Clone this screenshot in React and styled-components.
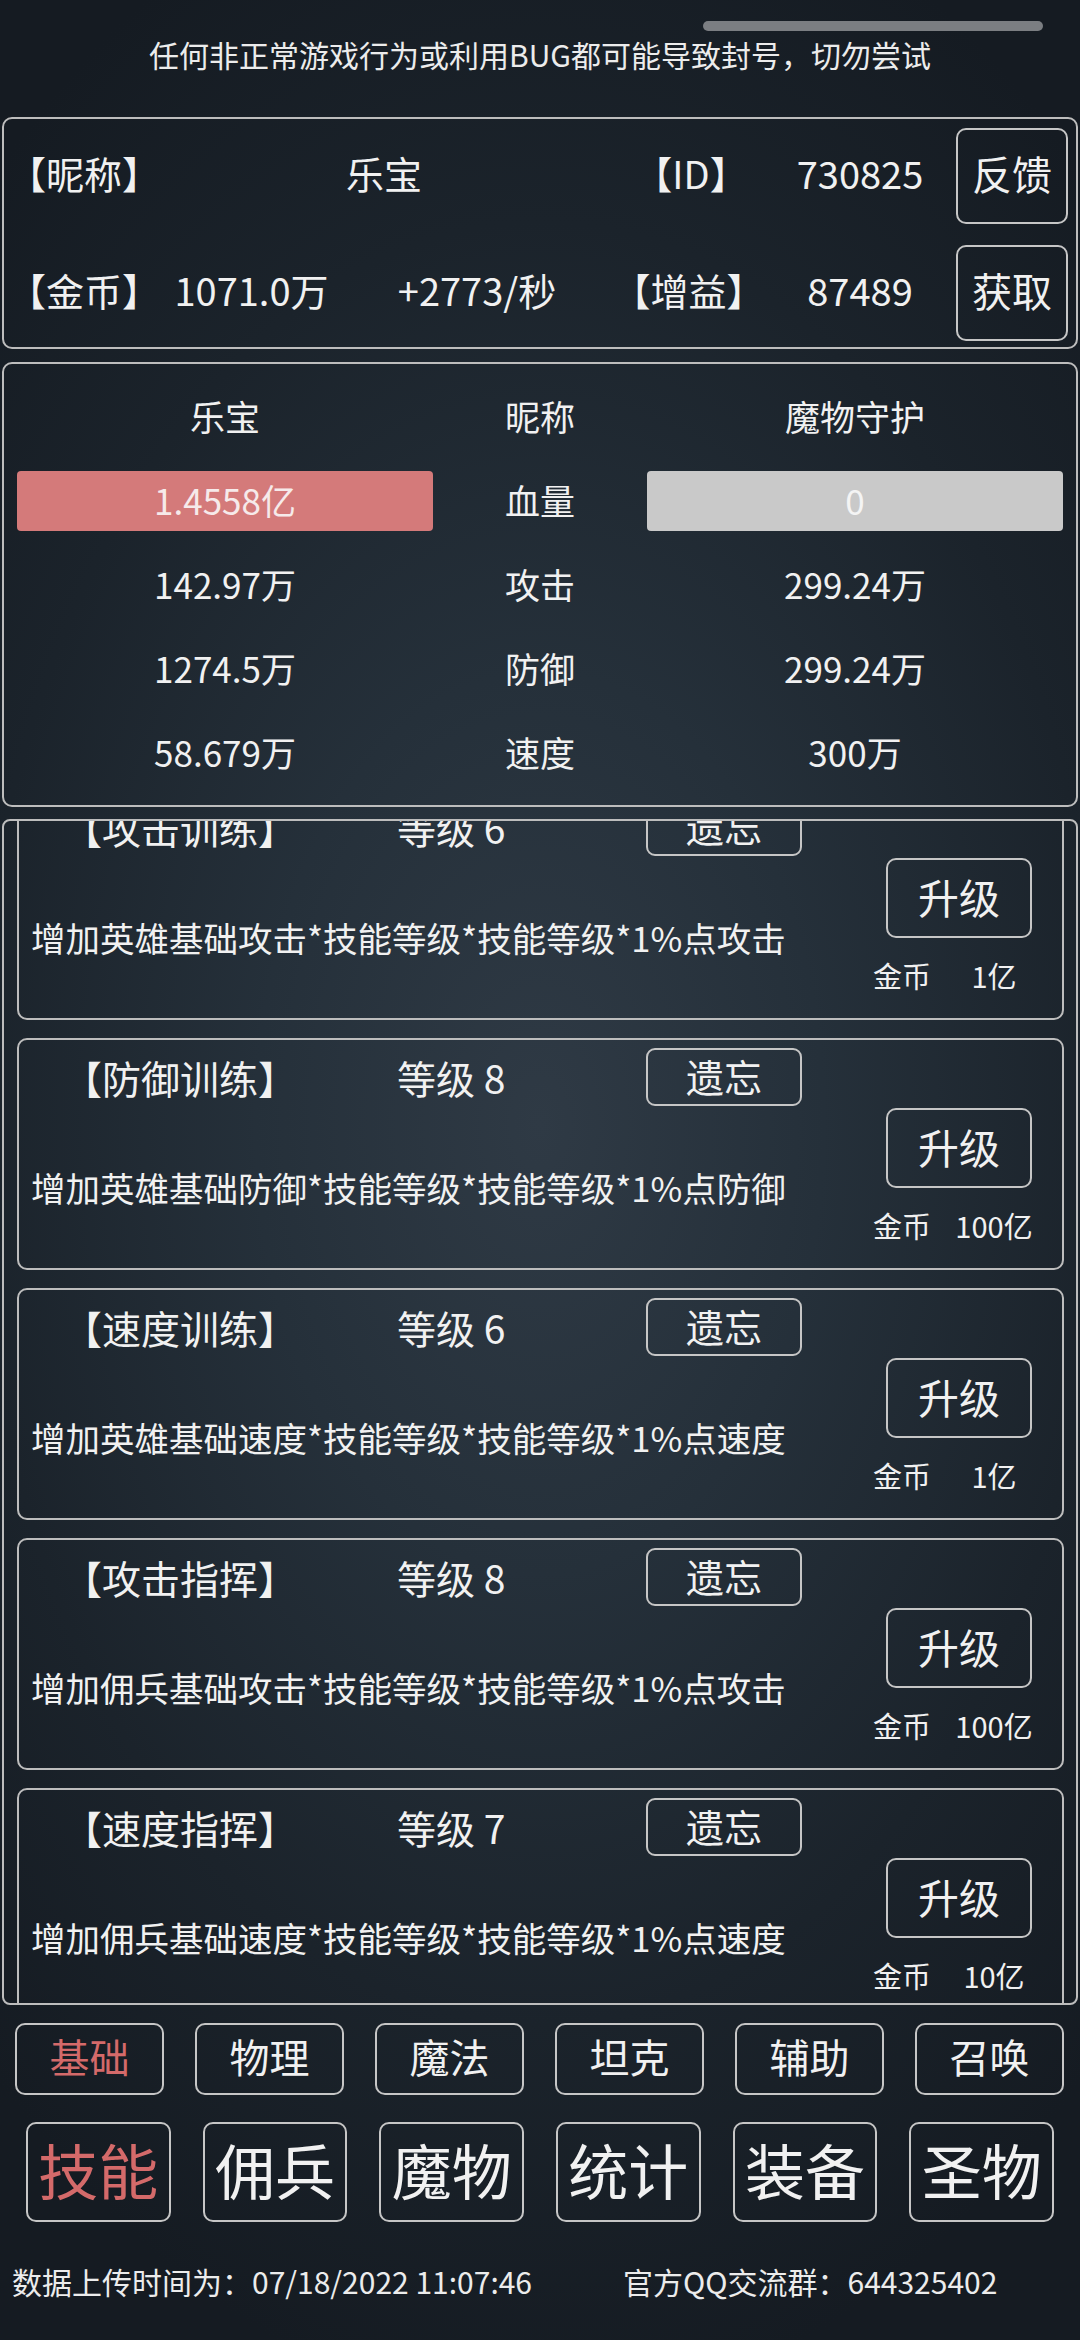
import React, { useLayoutEffect, useRef } from "react";
import styled, { createGlobalStyle } from "styled-components";

const SKILLS = [
  { id: 1, name: "【攻击训练】", level: 6, desc: "增加英雄基础攻击*技能等级*技能等级*1%点攻击", cost: "1亿" },
  { id: 2, name: "【防御训练】", level: 8, desc: "增加英雄基础防御*技能等级*技能等级*1%点防御", cost: "100亿" },
  { id: 3, name: "【速度训练】", level: 6, desc: "增加英雄基础速度*技能等级*技能等级*1%点速度", cost: "1亿" },
  { id: 4, name: "【攻击指挥】", level: 8, desc: "增加佣兵基础攻击*技能等级*技能等级*1%点攻击", cost: "100亿" },
  { id: 5, name: "【速度指挥】", level: 7, desc: "增加佣兵基础速度*技能等级*技能等级*1%点速度", cost: "10亿" },
];

const STATS = [
  { label: "攻击", mine: "142.97万", foe: "299.24万" },
  { label: "防御", mine: "1274.5万", foe: "299.24万" },
  { label: "速度", mine: "58.679万", foe: "300万" },
];

const SUB_TABS = ["基础", "物理", "魔法", "坦克", "辅助", "召唤"];
const MAIN_TABS = ["技能", "佣兵", "魔物", "统计", "装备", "圣物"];

export default function App() {
  const listRef = useRef(null);

  // the skill list is shown scrolled a little, first card partly hidden
  useLayoutEffect(() => {
    if (listRef.current) listRef.current.scrollTop = 45;
  }, []);

  return (
    <>
      <GlobalStyle />
      <Screen>
        <StatusRow>
          <Pill />
        </StatusRow>
        <Notice>任何非正常游戏行为或利用BUG都可能导致封号，切勿尝试</Notice>

        <Panel>
          <InfoRow $cols="148px 456px 158px 180px 118px">
            <Cell>【昵称】</Cell>
            <Cell>乐宝</Cell>
            <Cell>【ID】</Cell>
            <Cell>730825</Cell>
            <SideButton>反馈</SideButton>
          </InfoRow>
          <InfoRow $cols="148px 191px 260px 163px 180px 118px">
            <Cell>【金币】</Cell>
            <Cell>1071.0万</Cell>
            <Cell>+2773/秒</Cell>
            <Cell>【增益】</Cell>
            <Cell>87489</Cell>
            <SideButton>获取</SideButton>
          </InfoRow>
        </Panel>

        <StatsPanel>
          <StatCell>乐宝</StatCell>
          <StatCell>昵称</StatCell>
          <StatCell>魔物守护</StatCell>

          <StatCell>
            <HpBar $tone="red">1.4558亿</HpBar>
          </StatCell>
          <StatCell>血量</StatCell>
          <StatCell>
            <HpBar $tone="gray">0</HpBar>
          </StatCell>

          {STATS.map((s) => (
            <React.Fragment key={s.label}>
              <StatCell>{s.mine}</StatCell>
              <StatCell>{s.label}</StatCell>
              <StatCell>{s.foe}</StatCell>
            </React.Fragment>
          ))}
        </StatsPanel>

        <SkillList ref={listRef}>
          {SKILLS.map((skill) => (
            <SkillCard key={skill.id} skill={skill} />
          ))}
        </SkillList>

        <TabRow $pad="0 16px 0 15px" $gap="31px" $mt="18px">
          {SUB_TABS.map((t, i) => (
            <SubTab key={t} $active={i === 0}>
              {t}
            </SubTab>
          ))}
        </TabRow>

        <TabRow $pad="0 26px" $gap="32px" $mt="27px">
          {MAIN_TABS.map((t, i) => (
            <MainTab key={t} $active={i === 0}>
              {t}
            </MainTab>
          ))}
        </TabRow>

        <Footer>
          <span>数据上传时间为：07/18/2022 11:07:46</span>
          <span>官方QQ交流群：644325402</span>
        </Footer>
      </Screen>
    </>
  );
}

function SkillCard({ skill }) {
  return (
    <Card>
      <CardHead>
        <span>{skill.name}</span>
        <span>等级 {skill.level}</span>
        <ForgetButton>遗忘</ForgetButton>
      </CardHead>
      <CardBody>
        <Desc>{skill.desc}</Desc>
        <UpgradeCol>
          <UpgradeButton>升级</UpgradeButton>
          <CostRow>
            <span>金币</span>
            <CostValue>{skill.cost}</CostValue>
          </CostRow>
        </UpgradeCol>
      </CardBody>
    </Card>
  );
}

const GlobalStyle = createGlobalStyle`
  html, body {
    margin: 0;
    padding: 0;
  }
  body {
    background: #161c23;
    font-family: "Noto Sans CJK SC", "Noto Sans", sans-serif;
    color: #f1f1f1;
  }
  * {
    box-sizing: border-box;
  }
`;

const Screen = styled.div`
  width: 1080px;
  height: 2340px;
  overflow: hidden;
  display: flex;
  flex-direction: column;
  background: radial-gradient(
    ellipse 75% 55% at 50% 48%,
    #2f3a45 0%,
    #25303a 35%,
    #1b232b 70%,
    #151b22 100%
  );
`;

const StatusRow = styled.div`
  display: flex;
  justify-content: flex-end;
  padding: 21px 37px 0 0;
`;

const Pill = styled.div`
  width: 340px;
  height: 10px;
  border-radius: 5px;
  background: #7b7e82;
`;

const Notice = styled.div`
  margin: 3px 0 43px;
  height: 40px;
  line-height: 40px;
  font-size: 30px;
  text-align: center;
  color: #ececec;
`;

const Panel = styled.div`
  margin: 0 2px;
  height: 232px;
  border: 2px solid #bdbdbd;
  border-radius: 10px;
  padding: 9px 6px 0 4px;
  display: flex;
  flex-direction: column;
  gap: 21px;
`;

const InfoRow = styled.div`
  display: grid;
  grid-template-columns: ${(p) => p.$cols};
  align-items: center;
  height: 96px;
  font-size: 38px;
`;

const Cell = styled.span`
  padding-bottom: 8px;
  text-align: center;
  white-space: nowrap;
`;

const SideButton = styled.div`
  justify-self: end;
  width: 112px;
  height: 96px;
  padding-bottom: 6px;
  border: 2px solid #c6c6c6;
  border-radius: 10px;
  display: flex;
  align-items: center;
  justify-content: center;
  font-size: 40px;
`;

const StatsPanel = styled.div`
  margin: 13px 2px 0;
  height: 445px;
  border: 2px solid #bdbdbd;
  border-radius: 10px;
  padding: 12px 13px 0;
  display: grid;
  grid-template-columns: 1fr 214px 1fr;
  grid-auto-rows: 84px;
  font-size: 35px;
`;

const StatCell = styled.div`
  padding-bottom: 6px;
  display: flex;
  align-items: center;
  justify-content: center;
  white-space: nowrap;
`;

const HpBar = styled.div`
  width: 100%;
  height: 60px;
  margin-bottom: -4px;
  padding-bottom: 4px;
  border-radius: 4px;
  display: flex;
  align-items: center;
  justify-content: center;
  background: ${(p) => (p.$tone === "red" ? "#d47a7a" : "#c9c9c9")};
  color: ${(p) => (p.$tone === "red" ? "#f6eaea" : "#f4f4f4")};
`;

const SkillList = styled.div`
  margin: 12px 2px 0;
  height: 1186px;
  border: 2px solid #bdbdbd;
  border-radius: 8px;
  padding: 12px 12px 40px 13px;
  display: flex;
  flex-direction: column;
  gap: 18px;
  overflow-y: auto;
  scrollbar-width: none;
  &::-webkit-scrollbar {
    display: none;
  }
`;

const Card = styled.div`
  flex: none;
  height: 232px;
  border: 2px solid #bdbdbd;
  border-radius: 10px;
  padding-top: 8px;
  display: flex;
  flex-direction: column;
`;

const CardHead = styled.div`
  display: grid;
  grid-template-columns: 334px 249px 156px;
  align-items: center;
  height: 58px;
  padding-left: 44px;
  font-size: 39px;
  white-space: nowrap;
`;

const ForgetButton = styled.div`
  height: 58px;
  padding-bottom: 3px;
  border: 2px solid #c6c6c6;
  border-radius: 9px;
  display: flex;
  align-items: center;
  justify-content: center;
  font-size: 38px;
`;

const CardBody = styled.div`
  flex: 1;
  display: flex;
  align-items: center;
  justify-content: space-between;
  padding: 0 28px 0 12px;
`;

const Desc = styled.div`
  font-size: 34.5px;
  white-space: nowrap;
`;

const UpgradeCol = styled.div`
  align-self: stretch;
  display: flex;
  flex-direction: column;
  align-items: flex-end;
  padding-top: 2px;
`;

const UpgradeButton = styled.div`
  width: 146px;
  height: 80px;
  margin-right: 2px;
  padding-bottom: 4px;
  border: 2px solid #c6c6c6;
  border-radius: 10px;
  display: flex;
  align-items: center;
  justify-content: center;
  font-size: 41px;
`;

const CostRow = styled.div`
  margin-top: 19px;
  display: grid;
  grid-template-columns: 56px 80px;
  column-gap: 25px;
  line-height: 36px;
  font-size: 29px;
  white-space: nowrap;
`;

const CostValue = styled.span`
  text-align: center;
`;

const TabRow = styled.div`
  margin-top: ${(p) => p.$mt};
  padding: ${(p) => p.$pad};
  display: grid;
  grid-template-columns: repeat(6, 1fr);
  column-gap: ${(p) => p.$gap};
`;

const SubTab = styled.div`
  height: 72px;
  padding-bottom: 6px;
  border: 2px solid #c6c6c6;
  border-radius: 10px;
  display: flex;
  align-items: center;
  justify-content: center;
  font-size: 40px;
  color: ${(p) => (p.$active ? "#d46a6a" : "#f1f1f1")};
`;

const MainTab = styled(SubTab)`
  height: 100px;
  padding-bottom: 8px;
  font-size: 60px;
`;

const Footer = styled.div`
  margin-top: 41px;
  padding-left: 12px;
  display: grid;
  grid-template-columns: 611px auto;
  line-height: 36px;
  font-size: 30px;
  color: #ececec;
  white-space: nowrap;
`;
